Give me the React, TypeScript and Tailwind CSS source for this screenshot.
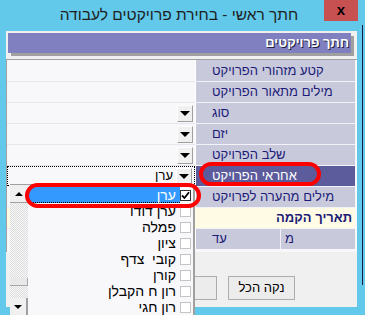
import React from "react";

function DropBtn() {
  return (
    <div className="w-[16px] h-[17px] mr-[2px] bg-[#f0f0f0] border border-t-white border-l-white border-r-[#a0a0a0] border-b-[#a0a0a0] flex items-center justify-center">
      <svg width="10" height="5" viewBox="0 0 10 5">
        <polygon points="0,0 10,0 5,5" fill="#000" />
      </svg>
    </div>
  );
}

function Check({ checked }: { checked?: boolean }) {
  return (
    <div
      className={
        "w-[11px] h-[11px] bg-white border flex items-center justify-center shrink-0 " +
        (checked ? "border-[#333]" : "border-[#c4c4c4]")
      }
    >
      {checked && (
        <svg width="9" height="9" viewBox="0 0 9 9">
          <path d="M1 4.5 L3.5 7 L8 1.2" stroke="#000" strokeWidth="1.8" fill="none" />
        </svg>
      )}
    </div>
  );
}

const labels = [
  { t: "קטע מזהורי הפרויקט", drop: false },
  { t: "מילים מתאור הפרויקט", drop: false },
  { t: "סוג", drop: true },
  { t: "יזם", drop: true },
  { t: "שלב הפרויקט", drop: true },
];

const items = ["ערן דודו", "פמלה", "ציון", "קובי  צדף", "קורן", "רון ח הקבלן", "רון חגי"];

export default function App() {
  return (
    <div className="relative w-[365px] h-[315px] overflow-hidden bg-[#62c9ea] font-['Liberation_Sans',Arial,sans-serif]">
      {/* title bar */}
      <div className="flex h-[31px]">
        <div className="flex-1 flex justify-center pl-[34px] pt-[6px]">
          <span dir="rtl" className="text-[15.5px] leading-[18px] text-[#1e1e1e]">
            חתך ראשי - בחירת פרויקטים לעבודה
          </span>
        </div>
        <div className="w-[34px] h-[21px] mr-[7px] bg-[#c75050] flex items-center justify-center">
          <span className="text-[15px] font-bold leading-none text-black -mt-[2px]">x</span>
        </div>
      </div>

      <div className="flex">
        {/* window body */}
        <div className="ml-[6px] w-[351px] h-[276px] bg-[#f0f0f0] flex flex-col">
          {/* header */}
          <div className="mt-[2px] ml-[2px] w-[343px] h-[20px] bg-[#8080c0] shadow-[3px_3px_0_#a0a0a0] flex items-center justify-end pr-[2px]">
            <span dir="rtl" className="text-white font-bold text-[13px] [text-shadow:1px_1px_0_#202040]">
              חתך פרויקטים
            </span>
          </div>

          {/* table */}
          <div className="mt-[6px] border-t border-l border-[#a0a0a0] bg-[#f8f8fa] pb-[3px] pr-[2px] flex flex-col">
            {labels.map((l, i) => (
              <div key={i} className="flex h-[21px]">
                <div
                  className={
                    "w-[189px] bg-[#f8f8fa] border-r border-r-white flex items-center justify-end " +
                    (i > 0 ? "border-t border-t-[#e6e6ee]" : "")
                  }
                >
                  {l.drop && <DropBtn />}
                </div>
                <div
                  className={
                    "flex-1 bg-[#c9c9dc] flex items-center pl-[16px] " +
                    (i > 0 ? "border-t border-t-[#f2f2f8]" : "")
                  }
                >
                  <span dir="rtl" className="text-[13px] text-[#1c1c78]">
                    {l.t}
                  </span>
                </div>
              </div>
            ))}
            {/* row 6: selected */}
            <div className="flex h-[21px]">
              <div className="w-[189px] bg-[#f8f8fa] border-r border-r-white border-t border-t-[#e6e6ee]">
                <div className="h-full border border-dotted border-black flex items-center justify-end">
                  <span dir="rtl" className="text-[13px] text-black mr-[3px]">ערן</span>
                  <DropBtn />
                </div>
              </div>
              <div className="flex-1 bg-[#5c5c9c] border-t border-t-[#f2f2f8] flex items-center pl-[16px]">
                <span dir="rtl" className="text-[13px] text-white">אחראי הפרויקט</span>
              </div>
            </div>
            {/* row 7 */}
            <div className="flex h-[21px]">
              <div className="w-[189px] bg-[#f8f8fa] border-r border-r-white border-t border-t-[#e6e6ee]" />
              <div className="flex-1 bg-[#c9c9dc] border-t border-t-[#f2f2f8] flex items-center pl-[16px]">
                <span dir="rtl" className="text-[13px] text-[#1c1c78]">מילים מהערה לפרויקט</span>
              </div>
            </div>
            {/* row 8: yellow */}
            <div className="flex h-[21px] bg-[#fffbe4] border-t border-t-[#f2f2f8] items-center justify-end pr-[3px]">
              <span dir="rtl" className="text-[13px] font-bold text-[#1c1c78]">תאריך הקמה</span>
            </div>
            {/* row 9 */}
            <div className="flex h-[21px]">
              <div className="w-[189px] bg-[#f8f8fa] border-r border-r-white border-t border-t-[#e6e6ee]" />
              <div className="w-[85px] bg-[#c9c9dc] border-t border-t-[#f2f2f8] border-r border-r-[#f2f2f8] flex items-center pl-[16px]">
                <span dir="rtl" className="text-[13px] text-[#1c1c78]">עד</span>
              </div>
              <div className="flex-1 bg-[#c9c9dc] border-t border-t-[#f2f2f8] flex items-center pl-[4px]">
                <span dir="rtl" className="text-[13px] text-[#1c1c78]">מ</span>
              </div>
            </div>
          </div>

          {/* buttons */}
          <div className="mt-[24px] flex justify-end pr-[62px] gap-[11px]">
            <div className="w-[67px] h-[24px] bg-[#ececec] border border-[#adadad]" />
            <div className="w-[67px] h-[24px] bg-[#ececec] border border-[#adadad] flex items-center justify-center">
              <span dir="rtl" className="text-[13px] text-black">נקה הכל</span>
            </div>
          </div>
        </div>

        {/* background window edge */}
        <div className="flex-1 flex">
          <div className="ml-[5px] mt-[-6px] w-[1px] h-[260px] bg-[#1a1a48]" />
        </div>
      </div>

      {/* dropdown list popup */}
      <div className="absolute left-[10px] top-[184px] w-[185px] h-[135px] bg-[#f8f8fa] border-t border-t-[#a0a0a0] border-r-2 border-r-[#a0a0a0] flex">
        <div className="w-[18px] flex flex-col">
          <div className="h-[18px] bg-[#f0f0f0] border-b border-b-[#a0a0a0] flex items-center justify-center">
            <svg width="8" height="4" viewBox="0 0 8 4">
              <polygon points="0,4 8,4 4,0" fill="#000" />
            </svg>
          </div>
          <div className="h-[75px] bg-[repeating-conic-gradient(#dcdcdc_0%_25%,#f8f8f8_0%_50%)] bg-[length:2px_2px]" />
          <div className="h-[8px] bg-[#e8e8e8] border-b border-r border-[#a8a8a8]" />
          <div className="h-[12px] bg-[repeating-conic-gradient(#dcdcdc_0%_25%,#f8f8f8_0%_50%)] bg-[length:2px_2px]" />
          <div className="h-[18px] bg-[#f0f0f0] border-r-2 border-r-[#a0a0a0] flex items-center justify-center">
            <svg width="8" height="4" viewBox="0 0 8 4">
              <polygon points="0,0 8,0 4,4" fill="#000" />
            </svg>
          </div>
        </div>
        <div className="flex-1 flex flex-col pt-[2px]">
          <div className="h-[16px] flex items-center pr-[2px]">
            <div className="flex-1 h-full bg-[#3399ff] border-b border-dotted border-b-black flex items-center justify-end pr-[4px]">
              <span dir="rtl" className="text-[14px] text-white leading-none">ערן</span>
            </div>
            <Check checked />
          </div>
          {items.map((it, i) => (
            <div key={i} className="h-[16px] flex items-center justify-end pr-[2px]">
              <span dir="rtl" className="text-[14px] text-black leading-none whitespace-pre pr-[4px]">
                {it}
              </span>
              <Check />
            </div>
          ))}
        </div>
      </div>

      {/* red annotation ovals */}
      <div className="absolute left-[199px] top-[162px] w-[122px] h-[24px] rounded-full border-4 border-[#ff0000]" />
      <div className="absolute left-[25px] top-[183px] w-[176px] h-[25px] rounded-full border-4 border-[#ff0000]" />
    </div>
  );
}
